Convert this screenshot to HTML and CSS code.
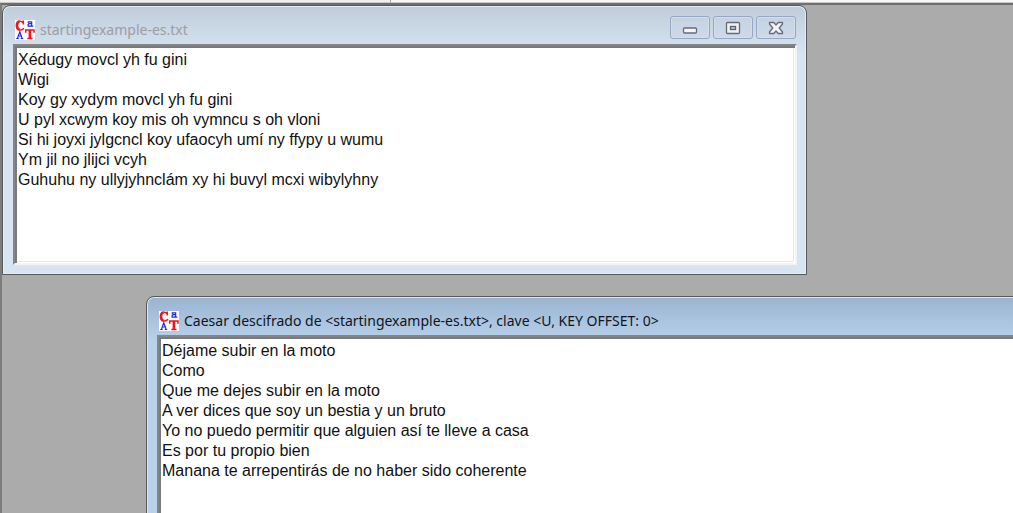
FILE: index.html
```html
<!DOCTYPE html>
<html lang="es">
<head>
<meta charset="utf-8">
<title>startingexample-es.txt</title>
<link rel="stylesheet" href="styles.css">
</head>
<body>
<svg class="defs" aria-hidden="true">
  <symbol id="cat" viewBox="0 0 20 20">
    <rect width="20" height="20" fill="#fff"/>
    <g fill="none" stroke="#f0141e">
      <path d="M8.300 .5v4M8.300 3C7 1.200 5.600 1 4.200 1.300M3.500 9.300C5.500 10.600 7.500 10 9 8.300" stroke-width="1.500"/>
      <path d="M4.500 1.300C1.200 2.200 1 8 4.200 9.500" stroke-width="2.600"/>
      <path d="M10.700 12.800V9.900h8.300v2.900M12.300 18.600h5.200" stroke-width="1.500"/>
      <path d="M14.900 10v8.500" stroke-width="2.600"/>
    </g>
    <g fill="none" stroke="#2626e8" stroke-width="1.200">
      <path d="M13.300 3.300V1.800h3.400V6.200h1.600M16.500 3.600h-2.200l-1.200 1v1.600h2.600l1-1"/>
      <path d="M2.500 18.300 4.800 11.800 7.100 18.300M3.400 16h2.800M1.200 18.500h2.500M5.800 18.500h2.400"/>
    </g>
  </symbol>
</svg>
<div class="toolbar-edge"><span class="pane"></span><span class="pane pane-wide"></span></div>
<main class="desktop">
  <section class="window window-source">
    <header class="titlebar">
      <svg class="app-icon" aria-hidden="true"><use href="#cat"/></svg>
      <label class="title" for="source">startingexample-es.txt</label>
      <div class="controls">
        <button class="control" type="button" aria-label="Minimizar">
          <svg viewBox="0 0 16 16"><rect x="1.500" y="8" width="13" height="5" rx="1" fill="#f4f4f4" stroke="#666b78" stroke-width="1.300"/></svg>
        </button>
        <button class="control" type="button" aria-label="Maximizar">
          <svg viewBox="0 0 16 16"><rect x="1.500" y="2.500" width="13" height="11" rx="1" fill="#f0f0f0" stroke="#666b78" stroke-width="1.300"/><rect x="5.500" y="6.500" width="5" height="3" fill="#b9c9dc" stroke="#5c6070" stroke-width="1.300"/></svg>
        </button>
        <button class="control" type="button" aria-label="Cerrar">
          <svg viewBox="0 0 16 16"><path d="M1.500 2.500h4.300L8 5l2.200-2.500h4.300V4L11.200 8l3.300 4v1.500h-4.300L8 11l-2.200 2.500H1.500V12L4.800 8 1.500 4z" fill="#f4f4f4" stroke="#666b78" stroke-width="1.300" stroke-linejoin="round"/></svg>
        </button>
      </div>
    </header>
    <textarea class="editor" id="source" spellcheck="false">Xédugy movcl yh fu gini
Wigi
Koy gy xydym movcl yh fu gini
U pyl xcwym koy mis oh vymncu s oh vloni
Si hi joyxi jylgcncl koy ufaocyh umí ny ffypy u wumu
Ym jil no jlijci vcyh
Guhuhu ny ullyjyhnclám xy hi buvyl mcxi wibylyhny</textarea>
  </section>
  <section class="window window-result">
    <header class="titlebar">
      <svg class="app-icon" aria-hidden="true"><use href="#cat"/></svg>
      <label class="title" for="result">Caesar descifrado de &lt;startingexample-es.txt&gt;, clave &lt;U, KEY OFFSET: 0&gt;</label>
    </header>
    <textarea class="editor" id="result" spellcheck="false">Déjame subir en la moto
Como
Que me dejes subir en la moto
A ver dices que soy un bestia y un bruto
Yo no puedo permitir que alguien así te lleve a casa
Es por tu propio bien
Manana te arrepentirás de no haber sido coherente</textarea>
  </section>
</main>
</body>
</html>
```
FILE: styles.css
```css
* {
  box-sizing: border-box;
}

body {
  margin: 0;
  height: 100vh;
  display: flex;
  flex-direction: column;
  overflow: hidden;
  background: #ababab;
  font-family: "Noto Sans", "Open Sans", sans-serif;
}

.defs {
  position: absolute;
  width: 0;
  height: 0;
}

.toolbar-edge {
  display: flex;
  height: 3px;
  background: #f0f0f0;
  border-bottom: 1px solid #c8c8c8;
}

.pane {
  width: 391px;
  border-right: 1px solid #a0a0a0;
}

.pane-wide {
  flex: 1;
  border-right: 0;
  background: #f8f8f8;
}

.desktop {
  position: relative;
  flex: 1;
  overflow: hidden;
  border-top: 2px solid #6e6e6e;
  border-left: 2px solid #7c7c7c;
}

.window {
  position: absolute;
  display: flex;
  flex-direction: column;
  padding: 0 9px 9px 10px;
  border: 1px solid #555b5b;
  border-radius: 8px 8px 0 0;
}

.window-source {
  top: 0;
  left: 0;
  width: 805px;
  height: 270px;
  background: linear-gradient(#bfcddb, #d7e4f1 48px);
  box-shadow: inset 0 0 0 1px #e4edf6;
}

.window-result {
  top: 291px;
  left: 144px;
  right: -24px;
  height: 270px;
  background: linear-gradient(#99b3d1, #b9d1ea 44px);
  box-shadow: inset 0 0 0 1px #dbe7f4;
}

.titlebar {
  display: flex;
  align-items: center;
  gap: 5px;
  height: 38px;
  padding: 9px 1px 0 2px;
}

.app-icon {
  width: 20px;
  height: 20px;
}

.title {
  flex: 1;
  font-size: 14px;
  line-height: 20px;
  white-space: nowrap;
  color: #10151c;
}

.window-source .title {
  color: #9b9ea3;
}

.controls {
  display: flex;
  gap: 3px;
  padding-bottom: 4px;
}

.control {
  display: flex;
  align-items: center;
  justify-content: center;
  width: 40px;
  height: 23px;
  padding: 0;
  border: 1px solid #97a6c2;
  border-radius: 3px;
  background: linear-gradient(#c4d2e1, #ccdaea);
  box-shadow: inset 0 0 0 1px #d3deea;
}

.control svg {
  width: 16px;
  height: 16px;
}

.editor {
  flex: 1;
  width: 100%;
  margin: 0;
  padding: 4px 3px;
  resize: none;
  overflow: hidden;
  outline: 0;
  border: 2px solid;
  border-color: #858585 #f3f3f3 #f3f3f3 #858585;
  border-radius: 0;
  box-shadow: inset 2px 2px #7a7a7a, inset -1px -1px #fff, inset -2px -2px #e6e6e6;
  background: #fff;
  color: #111;
  font: 16px/20px "Liberation Sans", Arial, sans-serif;
}
```
